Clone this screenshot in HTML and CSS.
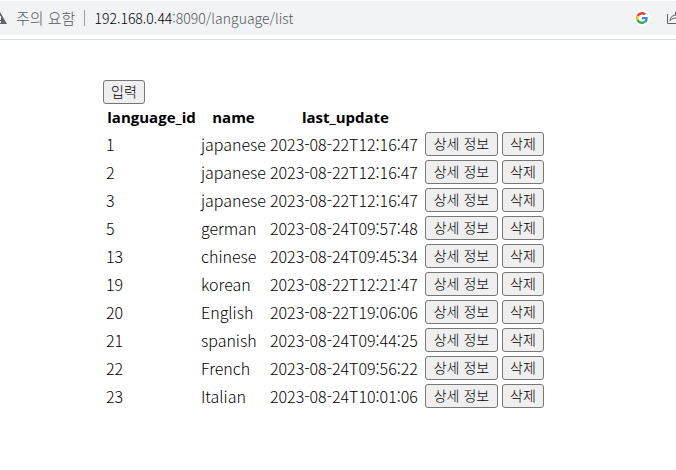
FILE: index.html
```
<!DOCTYPE html>
<html lang="ko">
<head>
<meta charset="utf-8">
<title>language list</title>
<link rel="stylesheet" href="styles.css">
</head>
<body>
<header class="toolbar">
  <div class="address">
    <svg class="warning" width="8" height="14" viewBox="0 0 8 14" aria-hidden="true"><path d="M-7 13 0 1 7 13Z" fill="#5f6368"/><path d="M0 5V9M0 10V12" stroke="#f1f3f4" stroke-width="2"/></svg>
    <span class="security">주의 요함</span>
    <span class="url"><span class="host">192.168.0.44</span>:8090/language/list</span>
    <span class="google"><svg width="12" height="12" viewBox="0 0 48 48" aria-hidden="true"><path fill="#ea4335" d="M24 9.500c3.540 0 6.710 1.220 9.210 3.600l6.850-6.850C35.900 2.380 30.470 0 24 0 14.620 0 6.510 5.380 2.560 13.220l7.980 6.190C12.430 13.720 17.740 9.500 24 9.500z"/><path fill="#4285f4" d="M46.980 24.550c0-1.570-.150-3.090-.380-4.550H24v9.020h12.940c-.580 2.960-2.260 5.480-4.780 7.180l7.730 6C44.400 38.020 46.980 31.840 46.980 24.550z"/><path fill="#fbbc05" d="M10.530 28.590A14.500 14.500 0 0 1 10.530 19.410l-7.980-6.190a24 24 0 0 0 0 21.560z"/><path fill="#34a853" d="M24 48c6.480 0 11.930-2.130 15.890-5.810l-7.730-6C30.010 37.640 27.240 38.490 24 38.490c-6.260 0-11.570-4.220-13.470-9.910l-7.980 6.190C6.510 42.620 14.620 48 24 48z"/></svg></span>
    <svg class="share" width="9" height="14" viewBox="0 0 9 14" fill="none" stroke="#5f6368" aria-hidden="true"><path d="M.500 3V12.500H9M3 9.500C3.500 6 5.500 4 9 4M3 9.500C5 7.500 7 7 9 7M8.500 4V1"/></svg>
  </div>
</header>
<main class="content">
  <button type="button">입력</button>
  <table>
    <colgroup><col class="id"><col class="name"><col class="date"><col class="detail"><col class="remove"></colgroup>
    <thead><tr><th>language_id</th><th>name</th><th>last_update</th></tr></thead>
    <tbody>
      <tr><td>1</td><td>japanese</td><td>2023-08-22T12:16:47</td><td><button type="button">상세 정보</button></td><td><button type="button">삭제</button></td></tr>
      <tr><td>2</td><td>japanese</td><td>2023-08-22T12:16:47</td><td><button type="button">상세 정보</button></td><td><button type="button">삭제</button></td></tr>
      <tr><td>3</td><td>japanese</td><td>2023-08-22T12:16:47</td><td><button type="button">상세 정보</button></td><td><button type="button">삭제</button></td></tr>
      <tr><td>5</td><td>german</td><td>2023-08-24T09:57:48</td><td><button type="button">상세 정보</button></td><td><button type="button">삭제</button></td></tr>
      <tr><td>13</td><td>chinese</td><td>2023-08-24T09:45:34</td><td><button type="button">상세 정보</button></td><td><button type="button">삭제</button></td></tr>
      <tr><td>19</td><td>korean</td><td>2023-08-22T12:21:47</td><td><button type="button">상세 정보</button></td><td><button type="button">삭제</button></td></tr>
      <tr><td>20</td><td>English</td><td>2023-08-22T19:06:06</td><td><button type="button">상세 정보</button></td><td><button type="button">삭제</button></td></tr>
      <tr><td>21</td><td>spanish</td><td>2023-08-24T09:44:25</td><td><button type="button">상세 정보</button></td><td><button type="button">삭제</button></td></tr>
      <tr><td>22</td><td>French</td><td>2023-08-24T09:56:22</td><td><button type="button">상세 정보</button></td><td><button type="button">삭제</button></td></tr>
      <tr><td>23</td><td>Italian</td><td>2023-08-24T10:01:06</td><td><button type="button">상세 정보</button></td><td><button type="button">삭제</button></td></tr>
    </tbody>
  </table>
</main>
</body>
</html>
```
FILE: styles.css
```
body {
  margin: 0;
  background: #fff;
  color: #000;
  font-family: "Noto Sans CJK KR", sans-serif;
  font-size: 16px;
  font-weight: 300;
  line-height: 21px;
}
.toolbar {
  padding: 1px 0 4px;
  border-bottom: 1px solid #dadce0;
}
.address {
  display: flex;
  align-items: center;
  height: 34px;
  background: #f1f3f4;
  color: #55595e;
  font-size: 14px;
  line-height: 16px;
  white-space: nowrap;
}
.security {
  margin-left: 8px;
  padding-right: 9px;
  border-right: 1px solid #9aa0a6;
  font-size: 15px;
}
.url {
  margin-left: 9px;
}
.host {
  color: #000;
}
.google {
  display: flex;
  margin-left: auto;
  margin-right: 17px;
  padding: 2px;
  border-radius: 50%;
  background: #fff;
}
.content {
  padding: 40px 103px;
}
button {
  display: block;
  height: 24px;
  padding: 0 7px 2px;
  border: 1px solid #767676;
  border-radius: 3px;
  background: #efefef;
  color: #000;
  font-family: inherit;
  font-size: 14px;
  font-weight: 300;
  line-height: 20px;
  white-space: nowrap;
}
td button {
  width: 100%;
}
table {
  border-spacing: 2px;
}
th,
td {
  padding: 1px;
  white-space: nowrap;
}
th {
  font-family: "Open Sans", sans-serif;
  font-size: 15px;
  font-weight: 700;
}
.id {
  width: 93px;
}
.name {
  width: 65px;
}
.date {
  width: 153px;
}
.detail {
  width: 75px;
}
.remove {
  width: 44px;
}
```
